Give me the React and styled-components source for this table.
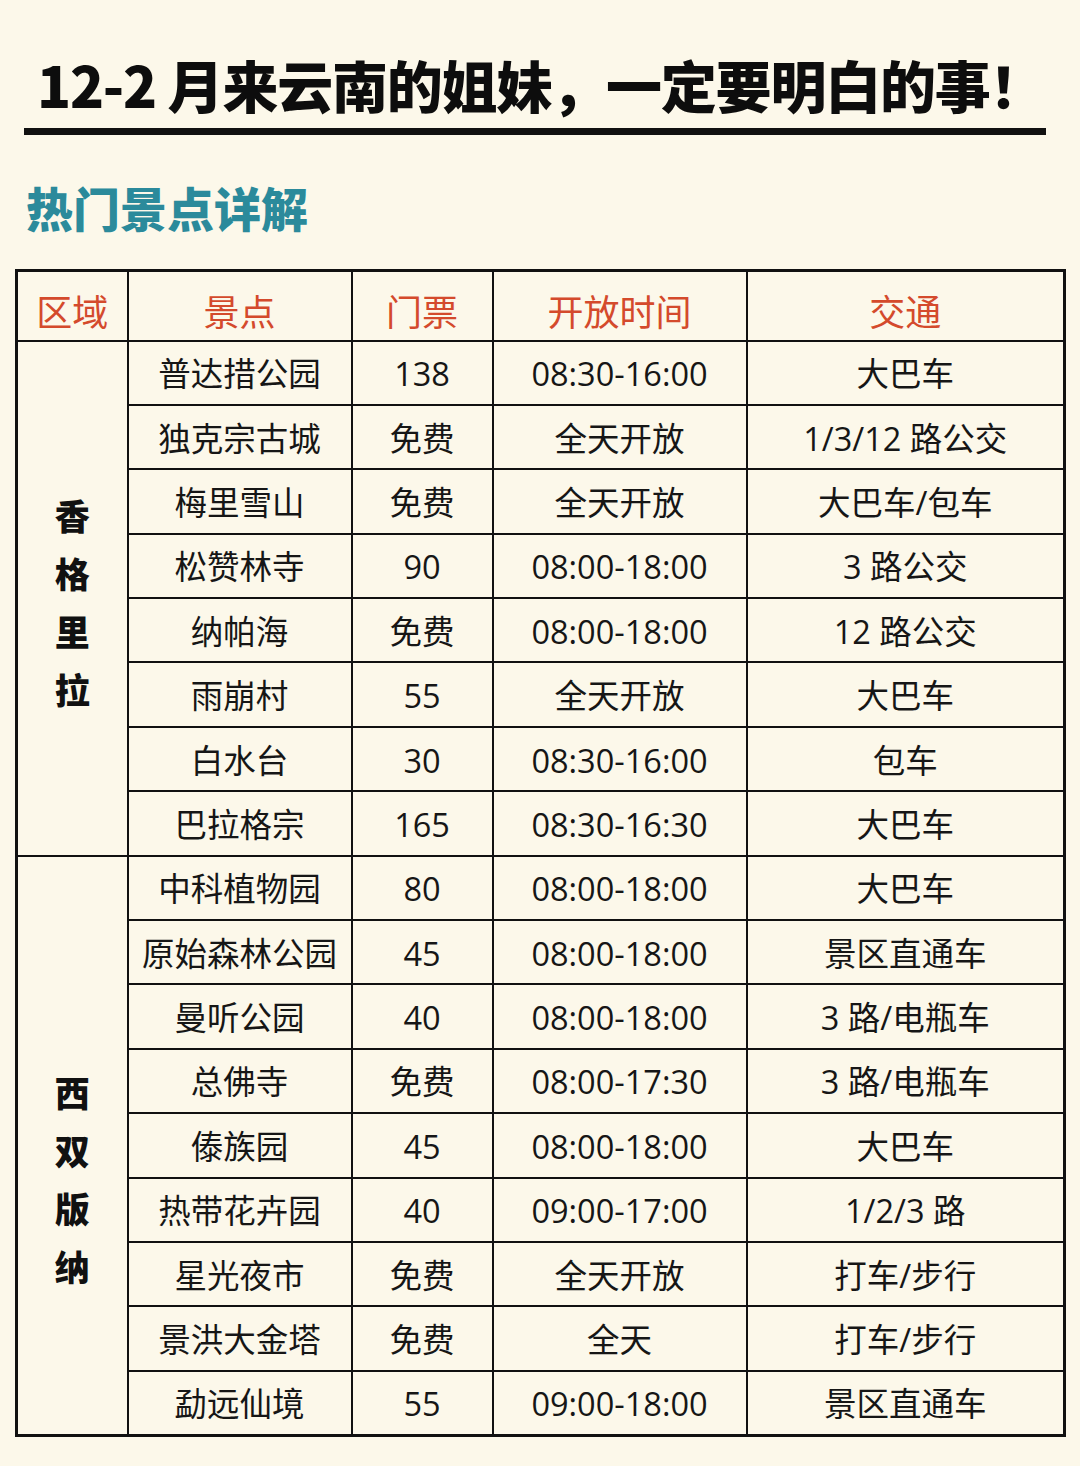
import React from 'react';
import styled, { createGlobalStyle } from 'styled-components';

const GlobalStyle = createGlobalStyle`
  html, body {
    margin: 0;
    padding: 0;
    background: #fcf8ea;
  }
  body {
    font-family: "Noto Sans CJK SC", "Noto Sans", sans-serif;
    color: #1a1a1a;
  }
`;

const Page = styled.div`
  width: 1080px;
  height: 1466px;
  box-sizing: border-box;
  padding: 49px 16px 0 15px;
  background: #fcf8ea;
  overflow: hidden;
`;

const Title = styled.h1`
  margin: 0 0 0 22px;
  font-size: 56px;
  line-height: 70px;
  font-weight: 900;
  letter-spacing: -1.2px;
  color: #0d0d0d;
  white-space: nowrap;
`;

const Rule = styled.div`
  margin: 9px 18px 0 9px;
  height: 7px;
  background: #111;
`;

const SubTitle = styled.h2`
  margin: 42px 0 0 11px;
  font-size: 47px;
  line-height: 60px;
  font-weight: 900;
  color: #2b8a9b;
`;

const Table = styled.table`
  margin-top: 32px;
  width: 1048px;
  border-collapse: collapse;
  table-layout: fixed;
  border: 3px solid #111;
`;

const Th = styled.th`
  height: 70px;
  border: 2.5px solid #111;
  font-size: 36px;
  line-height: 44px;
  font-weight: 400;
  color: #d44a2c;
  text-align: center;
  padding: 8px 0 0;
  box-sizing: border-box;
`;

const Td = styled.td`
  height: 64.4px;
  box-sizing: border-box;
  border: 2.5px solid #111;
  font-family: "Open Sans", "Noto Sans CJK SC", sans-serif;
  font-size: 32.5px;
  line-height: 40px;
  text-align: center;
  padding: 3px 0 0;
  white-space: nowrap;
  color: #161616;
`;

const RegionCell = styled.td`
  border: 2.5px solid #111;
  padding: ${(p) => p.$shift || 0}px 0 0;
  text-align: center;
  vertical-align: middle;
`;

const RegionText = styled.div`
  display: flex;
  flex-direction: column;
  align-items: center;
  gap: 8px;
  font-size: 35px;
  line-height: 50px;
  font-weight: 900;
  color: #111;
`;

const regions = [
  {
    name: '香格里拉',
    shift: 8,
    rows: [
      ['普达措公园', '138', '08:30-16:00', '大巴车'],
      ['独克宗古城', '免费', '全天开放', '1/3/12 路公交'],
      ['梅里雪山', '免费', '全天开放', '大巴车/包车'],
      ['松赞林寺', '90', '08:00-18:00', '3 路公交'],
      ['纳帕海', '免费', '08:00-18:00', '12 路公交'],
      ['雨崩村', '55', '全天开放', '大巴车'],
      ['白水台', '30', '08:30-16:00', '包车'],
      ['巴拉格宗', '165', '08:30-16:30', '大巴车'],
    ],
  },
  {
    name: '西双版纳',
    shift: 68,
    rows: [
      ['中科植物园', '80', '08:00-18:00', '大巴车'],
      ['原始森林公园', '45', '08:00-18:00', '景区直通车'],
      ['曼听公园', '40', '08:00-18:00', '3 路/电瓶车'],
      ['总佛寺', '免费', '08:00-17:30', '3 路/电瓶车'],
      ['傣族园', '45', '08:00-18:00', '大巴车'],
      ['热带花卉园', '40', '09:00-17:00', '1/2/3 路'],
      ['星光夜市', '免费', '全天开放', '打车/步行'],
      ['景洪大金塔', '免费', '全天', '打车/步行'],
      ['勐远仙境', '55', '09:00-18:00', '景区直通车'],
    ],
  },
];

const App = () => (
  <Page>
    <GlobalStyle />
    <Title>12-2 月来云南的姐妹，一定要明白的事！</Title>
    <Rule />
    <SubTitle>热门景点详解</SubTitle>
    <Table>
      <colgroup>
        <col style={{ width: 111 }} />
        <col style={{ width: 224 }} />
        <col style={{ width: 141 }} />
        <col style={{ width: 254 }} />
        <col style={{ width: 318 }} />
      </colgroup>
      <thead>
        <tr>
          <Th>区域</Th>
          <Th>景点</Th>
          <Th>门票</Th>
          <Th>开放时间</Th>
          <Th>交通</Th>
        </tr>
      </thead>
      <tbody>
        {regions.map((region) =>
          region.rows.map((row, i) => (
            <tr key={region.name + i}>
              {i === 0 && (
                <RegionCell rowSpan={region.rows.length} $shift={region.shift}>
                  <RegionText>
                    {region.name.split('').map((c) => (
                      <span key={c}>{c}</span>
                    ))}
                  </RegionText>
                </RegionCell>
              )}
              {row.map((cell, j) => (
                <Td key={j}>{cell}</Td>
              ))}
            </tr>
          ))
        )}
      </tbody>
    </Table>
  </Page>
);

export default App;
